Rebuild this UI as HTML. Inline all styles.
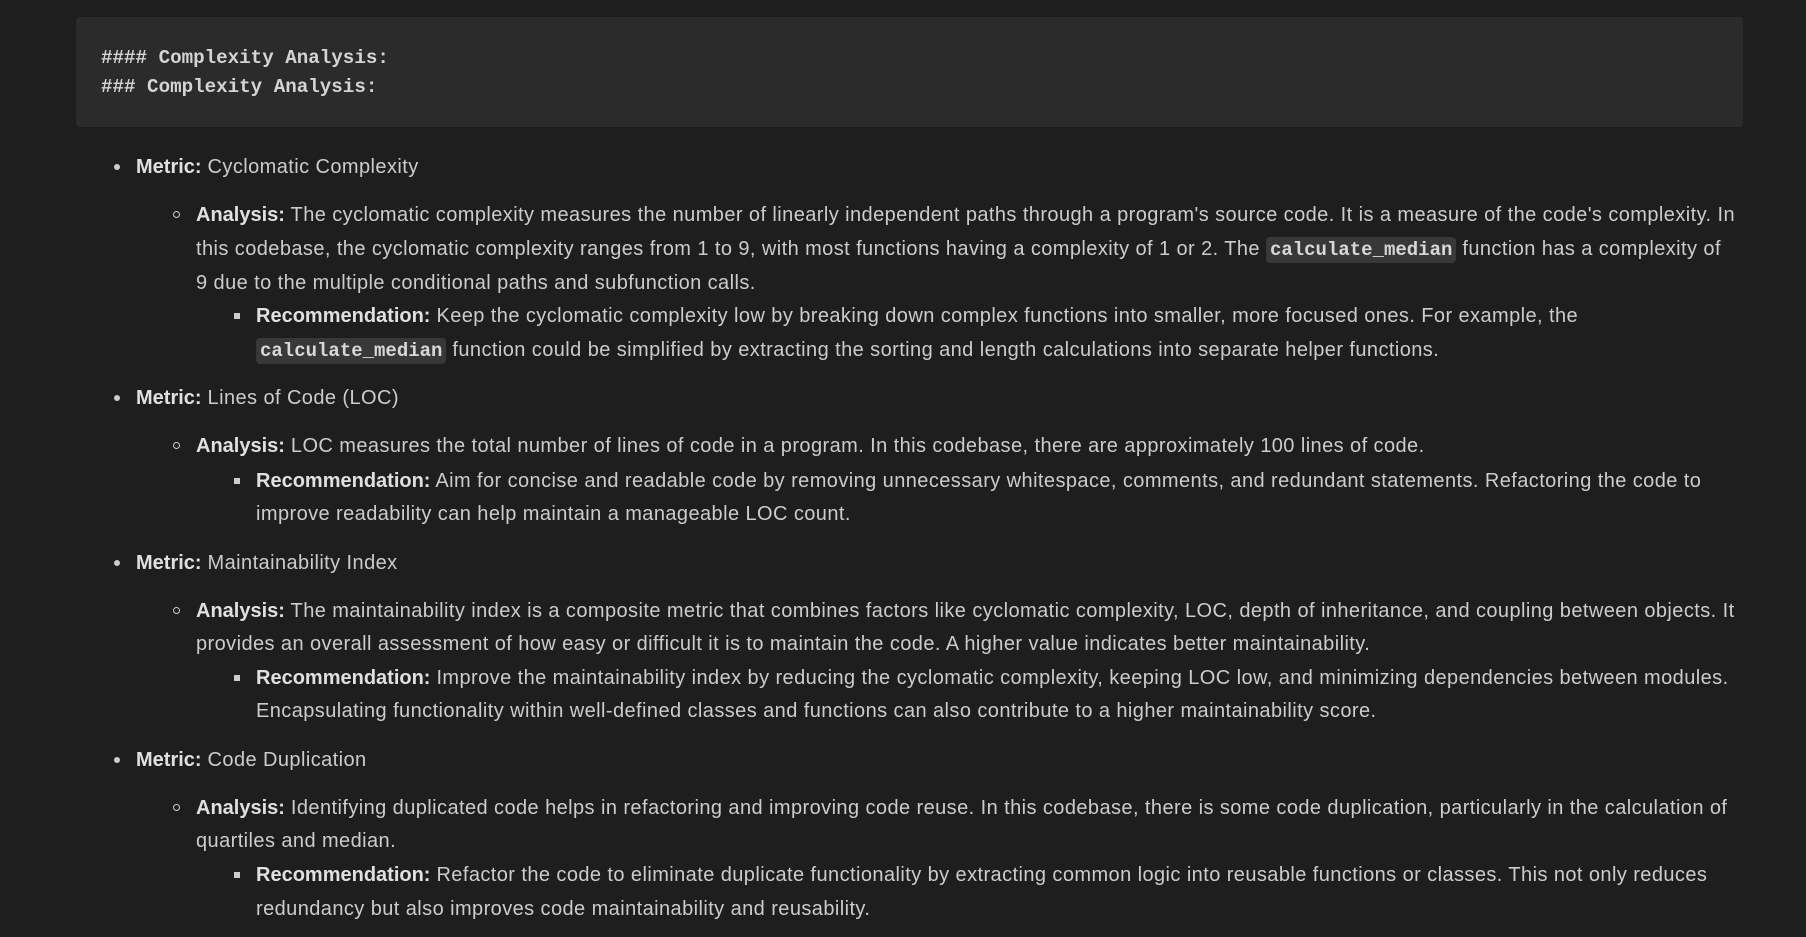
<!DOCTYPE html>
<html><head><meta charset="utf-8"><style>
body{margin:0;background:#1e1e1e;width:1806px;height:937px;overflow:hidden;position:relative;font-family:"Liberation Sans",sans-serif;color:#cccccc;}
.code{position:absolute;left:76px;top:17px;width:1667px;height:110px;background:#2b2b2b;border-radius:4px;}
.code div{position:absolute;left:25px;font-family:"Liberation Mono",monospace;font-size:19.2px;font-weight:bold;color:#d4d4d4;white-space:pre;line-height:20px;}
.l{position:absolute;white-space:nowrap;font-size:20px;letter-spacing:0.42px;line-height:34px;height:34px;}
.l b{color:#e0e0e0;letter-spacing:0}
.m{left:136px}.a{left:196px}.r{left:256px}
.dot{position:absolute;}
.disc{width:6px;height:6px;border-radius:50%;background:#ccc;left:114px}
.circ{width:5px;height:5px;border-radius:50%;border:1.3px solid #ccc;left:173px}
.sq{width:6px;height:6px;background:#ccc;left:234px}
code{font-family:"Liberation Mono",monospace;font-size:19px;letter-spacing:0;background:#383838;border-radius:4px;padding:2px 4px;color:#d8d8d8;font-weight:bold}
</style></head><body>
<div class="code"><div style="top:31px">#### Complexity Analysis:</div><div style="top:60px">### Complexity Analysis:</div></div>

<div class="dot disc" style="top:164px"></div>
<div class="l m" style="top:150px"><b>Metric:</b> Cyclomatic Complexity</div>
<div class="dot circ" style="top:211px"></div>
<div class="l a" style="top:198px"><b>Analysis:</b> The cyclomatic complexity measures the number of linearly independent paths through a program's source code. It is a measure of the code's complexity. In</div>
<div class="l a" style="top:232px">this codebase, the cyclomatic complexity ranges from 1 to 9, with most functions having a complexity of 1 or 2. The <code>calculate_median</code> function has a complexity of</div>
<div class="l a" style="top:266px">9 due to the multiple conditional paths and subfunction calls.</div>
<div class="dot sq" style="top:313px"></div>
<div class="l r" style="top:299px"><b>Recommendation:</b> Keep the cyclomatic complexity low by breaking down complex functions into smaller, more focused ones. For example, the</div>
<div class="l r" style="top:333px"><code>calculate_median</code> function could be simplified by extracting the sorting and length calculations into separate helper functions.</div>

<div class="dot disc" style="top:395px"></div>
<div class="l m" style="top:381px"><b>Metric:</b> Lines of Code (LOC)</div>
<div class="dot circ" style="top:442px"></div>
<div class="l a" style="top:429px"><b>Analysis:</b> LOC measures the total number of lines of code in a program. In this codebase, there are approximately 100 lines of code.</div>
<div class="dot sq" style="top:478px"></div>
<div class="l r" style="top:464px"><b>Recommendation:</b> Aim for concise and readable code by removing unnecessary whitespace, comments, and redundant statements. Refactoring the code to</div>
<div class="l r" style="top:497px">improve readability can help maintain a manageable LOC count.</div>

<div class="dot disc" style="top:560px"></div>
<div class="l m" style="top:546px"><b>Metric:</b> Maintainability Index</div>
<div class="dot circ" style="top:607px"></div>
<div class="l a" style="top:594px"><b>Analysis:</b> The maintainability index is a composite metric that combines factors like cyclomatic complexity, LOC, depth of inheritance, and coupling between objects. It</div>
<div class="l a" style="top:627px">provides an overall assessment of how easy or difficult it is to maintain the code. A higher value indicates better maintainability.</div>
<div class="dot sq" style="top:675px"></div>
<div class="l r" style="top:661px"><b>Recommendation:</b> Improve the maintainability index by reducing the cyclomatic complexity, keeping LOC low, and minimizing dependencies between modules.</div>
<div class="l r" style="top:694px">Encapsulating functionality within well-defined classes and functions can also contribute to a higher maintainability score.</div>

<div class="dot disc" style="top:757px"></div>
<div class="l m" style="top:743px"><b>Metric:</b> Code Duplication</div>
<div class="dot circ" style="top:804px"></div>
<div class="l a" style="top:791px"><b>Analysis:</b> Identifying duplicated code helps in refactoring and improving code reuse. In this codebase, there is some code duplication, particularly in the calculation of</div>
<div class="l a" style="top:824px">quartiles and median.</div>
<div class="dot sq" style="top:872px"></div>
<div class="l r" style="top:858px"><b>Recommendation:</b> Refactor the code to eliminate duplicate functionality by extracting common logic into reusable functions or classes. This not only reduces</div>
<div class="l r" style="top:892px">redundancy but also improves code maintainability and reusability.</div>
</body></html>
